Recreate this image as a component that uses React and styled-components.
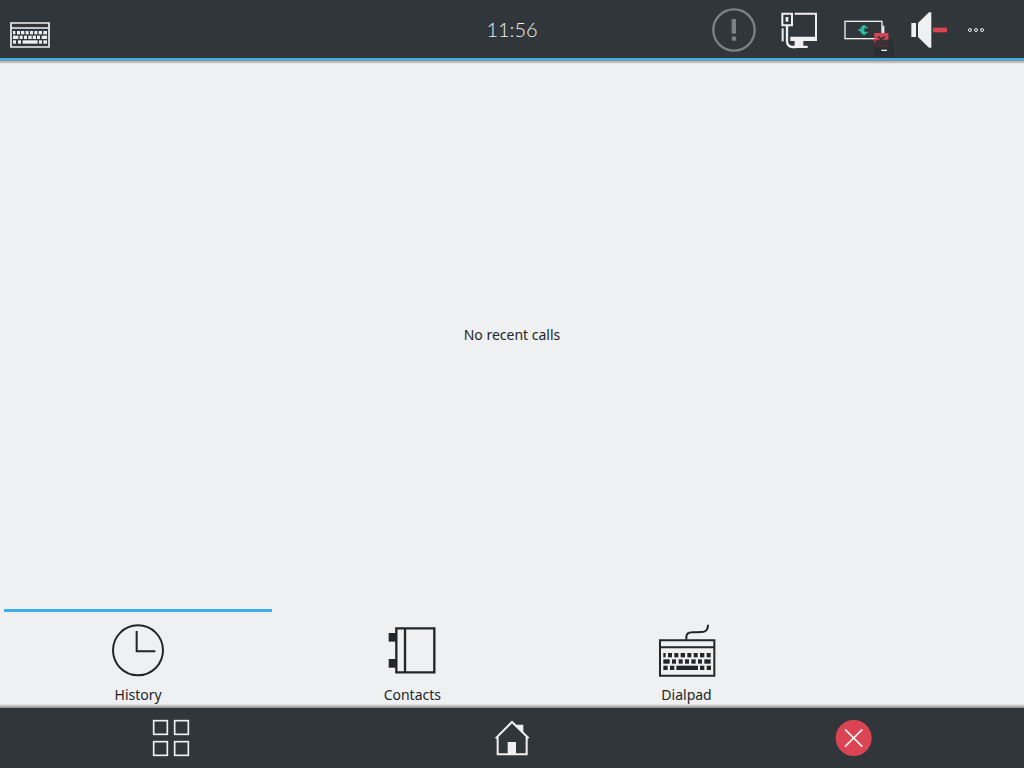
import React from "react";
import styled, { createGlobalStyle } from "styled-components";

const c = {
  dark: "#31363b",
  light: "#eff0f1",
  page: "#eff0f1",
  ink: "#232629",
  blue: "#3daee9",
  red: "#da4453",
};

const GlobalStyle = createGlobalStyle`
  * { box-sizing: border-box; }
  body {
    margin: 0;
    background: ${c.page};
    color: ${c.ink};
    font: 14px/20px "Noto Sans", sans-serif;
  }
`;

const Shell = styled.div`
  display: flex;
  flex-direction: column;
  min-height: 100vh;
`;

const TopBar = styled.header`
  display: grid;
  grid-template-columns: 1fr auto 1fr;
  align-items: center;
  height: 60px;
  padding: 2px 10px 0;
  background: ${c.dark};
  border-bottom: 2px solid ${c.blue};
  color: ${c.light};
`;

const Clock = styled.time`
  padding-bottom: 2px;
  font-family: Lato, sans-serif;
  font-size: 20px;
  font-weight: 300;
  line-height: 28px;
`;

const Tray = styled.div`
  display: flex;
  justify-content: flex-end;
  padding-right: 23px;
`;

const IconButton = styled.button`
  display: flex;
  align-items: center;
  justify-content: center;
  width: ${(p) => p.$width}px;
  height: 48px;
  padding: 0;
  border: 0;
  background: none;
  color: inherit;
  cursor: pointer;
`;

const Glyph = styled.svg`
  display: block;
  flex: none;
  width: ${(p) => p.$size}px;
  height: ${(p) => p.$size}px;
  overflow: visible;
`;

const Shadow = styled.div`
  height: 4px;
  background: linear-gradient(
    ${(p) => (p.$up ? "to top" : "to bottom")},
    #8b8b8c,
    #bcbcbe 50%,
    ${c.page}
  );
`;

const Content = styled.main`
  flex: 1;
  display: flex;
  align-items: center;
  justify-content: center;
  padding-bottom: 4px;
`;

const Message = styled.p`
  margin: 0;
`;

const Tabs = styled.nav`
  display: grid;
  grid-template-columns: repeat(3, 26.4%);
  gap: 6px;
  padding: 0 4px;
`;

const Tab = styled.button`
  display: flex;
  flex-direction: column;
  align-items: center;
  gap: 3px;
  height: 95px;
  padding: 6px 0 0;
  border: 0;
  border-top: 3px solid ${(p) => (p.$active ? c.blue : "transparent")};
  background: none;
  color: inherit;
  font: inherit;
  cursor: pointer;
`;

const BottomBar = styled.nav`
  display: grid;
  grid-template-columns: repeat(3, 1fr);
  place-items: center;
  height: 60px;
  background: ${c.dark};
  color: ${c.light};
`;

function Icon({ size = 48, box, children }) {
  return (
    <Glyph $size={size} viewBox={box} fill="currentColor" aria-hidden="true">
      {children}
    </Glyph>
  );
}

const keyRows = [
  [114, [[53, 7], [67, 12], [86, 12], [105, 13], [125, 12], [144, 12], [163, 13], [183, 12]]],
  [133, [[53, 19], [79, 12], [99, 12], [118, 12], [137, 13], [157, 12], [176, 19]]],
  [152, [[53, 13], [73, 13], [92, 65], [163, 13], [183, 13]]],
];

function DialpadIcon() {
  return (
    <Icon size={64} box="28 9 192 192">
      <path d="M43 76H206V182H43ZM43 97H206" fill="none" stroke="currentColor" strokeWidth="6" />
      <path
        d="M122 74V67C122 57 129 52 139 52C153 51 162 52 174 50C184 48 187 41 187 29"
        fill="none"
        stroke="currentColor"
        strokeWidth="6"
      />
      {keyRows.map(([y, keys]) =>
        keys.map(([x, w]) => <rect key={`${x}-${y}`} x={x} y={y} width={w} height="13" />)
      )}
    </Icon>
  );
}

const smallKeyRows = [
  [63, [[39, 7], [51, 9], [63, 10], [77, 9], [90, 9], [103, 9], [116, 10], [130, 11]]],
  [77, [[39, 16], [59, 9], [72, 9], [85, 10], [98, 10], [111, 9], [125, 16]]],
  [91, [[39, 9], [54, 9], [68, 45], [117, 9], [130, 11]]],
];

function KeyboardIcon() {
  return (
    <Icon size={40} box="30 0 120 120">
      <path d="M33 39H147V111H33ZM33 54H147" fill="none" stroke="currentColor" strokeWidth="5" />
      {smallKeyRows.map(([y, keys]) =>
        keys.map(([x, w]) => <rect key={`${x}-${y}`} x={x} y={y} width={w} height="10" />)
      )}
    </Icon>
  );
}

function AlertIcon() {
  return (
    <Icon box="30 18 144 144">
      <g color="#7d8184" fill="currentColor">
        <circle cx="102" cy="90" r="62" fill="none" stroke="currentColor" strokeWidth="7" />
        <rect x="95" y="57" width="13" height="44" />
        <circle cx="102" cy="116" r="7" />
      </g>
    </Icon>
  );
}

function NetworkIcon() {
  return (
    <Icon box="225 17 144 144">
      <path d="M247 40H276V75H247ZM284 40H348V112" fill="none" stroke="currentColor" strokeWidth="6" />
      <rect x="257" y="50" width="8" height="14" />
      <rect x="245" y="84" width="6" height="39" />
      <path d="M261 77V122C261 134 267 140 279 140H288" fill="none" stroke="currentColor" strokeWidth="7" />
      <path d="M271 109H351V122H310V136H323V143H279V136H284V122H271Z" />
    </Icon>
  );
}

function BatteryIcon() {
  return (
    <Icon box="14 3 144 144">
      <rect x="29" y="49" width="111" height="52" fill="none" stroke="currentColor" strokeWidth="4" />
      <rect x="141" y="62" width="6" height="24" />
      <path
        d="M69 73H75C76 66 80 61 86 60H90V65H97V70H87V80H97V85H90V90H86C80 89 76 84 75 78H69Z"
        fill="#2bbfa1"
      />
      <rect x="117" y="84" width="42" height="43" fill={c.red} />
      <path d="M119 112Q119 104 127 104H160Q175 106 175 120V155H115V116Z" fill="#2a2f33" opacity="0.88" />
      <path d="M124 94H132L138 100L144 94H152L140 106H136Z" fill="#31363b" />
      <rect x="138" y="134" width="17" height="4" />
    </Icon>
  );
}

function VolumeIcon() {
  return (
    <Icon box="30 18 144 144">
      <rect x="49" y="69" width="14" height="42" />
      <path d="M69 69L102 37H109V143H102L69 111Z" />
      <rect x="114" y="83" width="42" height="14" fill={c.red} />
    </Icon>
  );
}

function MoreIcon() {
  return (
    <Icon size={30} box="198 45 90 90">
      <g fill="none" stroke="currentColor" strokeWidth="3">
        <circle cx="225" cy="90" r="4.5" />
        <circle cx="243" cy="90" r="4.5" />
        <circle cx="261" cy="90" r="4.5" />
      </g>
    </Icon>
  );
}

function HistoryIcon() {
  return (
    <Icon size={64} box="20 54 192 192">
      <g fill="none" stroke="currentColor" strokeWidth="6">
        <circle cx="116" cy="151" r="75" />
        <path d="M112 93V154H168" />
      </g>
    </Icon>
  );
}

function ContactsIcon() {
  return (
    <Icon size={64} box="31 9 192 192">
      <path d="M80 40H194V172H80ZM106 40V172" fill="none" stroke="currentColor" strokeWidth="7" />
      <rect x="57" y="54" width="24" height="26" />
      <rect x="57" y="132" width="24" height="26" />
    </Icon>
  );
}

function AppsIcon() {
  return (
    <Icon box="21 42 144 144">
      <g fill="none" stroke="currentColor" strokeWidth="5">
        <rect x="41" y="62" width="41" height="41" />
        <rect x="104" y="62" width="41" height="41" />
        <rect x="41" y="125" width="41" height="41" />
        <rect x="104" y="125" width="41" height="41" />
      </g>
    </Icon>
  );
}

function HomeIcon() {
  return (
    <Icon box="24 43 144 144">
      <path
        d="M47 116L96 67L146 116M53 112V164H140V112"
        fill="none"
        stroke="currentColor"
        strokeWidth="6"
      />
      <path d="M108 75H130V99Z" />
      <rect x="83" y="127" width="25" height="37" />
    </Icon>
  );
}

function CloseIcon() {
  return (
    <Icon box="13 42 144 144">
      <circle cx="87" cy="114" r="54" fill={c.red} />
      <path d="M61 88L113 140M113 88L61 140" fill="none" stroke="currentColor" strokeWidth="5" />
    </Icon>
  );
}

const trayItems = [
  ["Notifications", AlertIcon, 65],
  ["Network", NetworkIcon, 65],
  ["Battery", BatteryIcon, 65],
  ["Volume", VolumeIcon, 65],
  ["More", MoreIcon, 30],
];

const tabItems = [
  ["History", HistoryIcon],
  ["Contacts", ContactsIcon],
  ["Dialpad", DialpadIcon],
];

const navItems = [
  ["Applications", AppsIcon],
  ["Home", HomeIcon],
  ["Close", CloseIcon],
];

export default function App() {
  return (
    <Shell>
      <GlobalStyle />
      <TopBar>
        <IconButton type="button" aria-label="Keyboard" $width={40}>
          <KeyboardIcon />
        </IconButton>
        <Clock>11:56</Clock>
        <Tray>
          {trayItems.map(([label, Art, width]) => (
            <IconButton key={label} type="button" aria-label={label} $width={width}>
              <Art />
            </IconButton>
          ))}
        </Tray>
      </TopBar>
      <Shadow />
      <Content>
        <Message>No recent calls</Message>
      </Content>
      <Tabs aria-label="Phone views">
        {tabItems.map(([label, Art], i) => (
          <Tab key={label} type="button" $active={i === 0}>
            <Art />
            <span>{label}</span>
          </Tab>
        ))}
      </Tabs>
      <Shadow $up />
      <BottomBar aria-label="System">
        {navItems.map(([label, Art]) => (
          <IconButton key={label} type="button" aria-label={label} $width={48}>
            <Art />
          </IconButton>
        ))}
      </BottomBar>
    </Shell>
  );
}
